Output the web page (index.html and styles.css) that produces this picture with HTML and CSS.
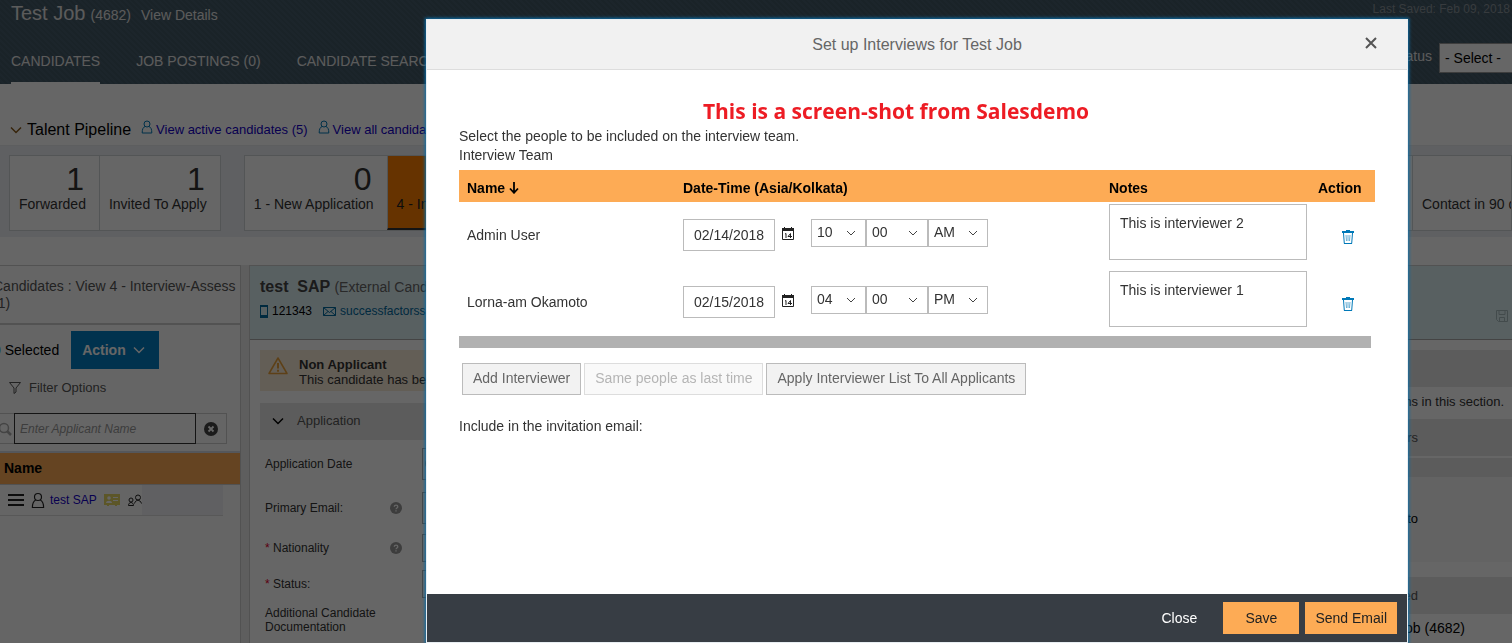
FILE: index.html
```html
<!DOCTYPE html>
<html lang="en">
<head>
    <meta charset="UTF-8">
    <meta name="viewport" content="width=device-width, initial-scale=1.0">
    <title>Set up Interviews for Test Job</title>
    <link rel="stylesheet" href="styles.css">
</head>
<body>
    <!-- Shared icons -->
    <svg class="sprite" aria-hidden="true">
        <symbol id="icon-person" viewBox="0 0 12 14">
            <circle cx="6" cy="4" r="3" fill="none" stroke="currentColor"/>
            <path d="M4 6.500C2 7.500 1.200 9 1.200 13h9.600c0-4-.8-5.500-2.800-6.500" fill="none" stroke="currentColor"/>
        </symbol>
        <symbol id="icon-down" viewBox="0 0 12 8">
            <path d="M1 1.500l5 5 5-5" fill="none" stroke="currentColor" stroke-width="1.500"/>
        </symbol>
        <symbol id="icon-calendar" viewBox="0 0 12 13">
            <path d="M.5 2.500h11v10H.5z" fill="none" stroke="currentColor"/>
            <path d="M0 1h12v3H0zM2 0h1v1H2zM9 0h1v1H9z" fill="currentColor"/>
            <path d="M3 7l1-.5V11M8.500 11V6.500L6 9.500h4" fill="none" stroke="currentColor"/>
        </symbol>
        <symbol id="icon-trash" viewBox="0 0 14 16">
            <path d="M1 2h4V1h4v1h4v2H1z" fill="currentColor"/>
            <path d="M2.500 4l.8 10.500h7.400L11.500 4" fill="none" stroke="currentColor"/>
            <path d="M3 14h8v1H3z" fill="currentColor"/>
            <path d="M5 6l.5 6M7 6v6M9 6l-.5 6" fill="none" stroke="currentColor" opacity="0.6"/>
        </symbol>
        <symbol id="icon-help" viewBox="0 0 12 12">
            <circle cx="6" cy="6" r="6" fill="#999"/>
            <path d="M4.300 4.700c0-2.200 3.500-2.200 3.500 0C7.800 6 6 5.900 6 7.300M6 8.200v1.400" fill="none" stroke="#fff" stroke-width="1.300"/>
        </symbol>
    </svg>

    <div class="page">
        <!-- Job Header -->
        <header class="job-header">
            <div class="job-main">
                <div class="job-title">
                    <h1>Test Job</h1>
                    <span>(4682)</span>
                    <a href="#">View Details</a>
                </div>
                <nav class="tabs">
                    <a href="#" class="active">CANDIDATES</a>
                    <a href="#">JOB POSTINGS (0)</a>
                    <a href="#">CANDIDATE SEARCH</a>
                </nav>
            </div>
            <div class="job-side">
                <p class="saved">Last Saved: Feb 09, 2018</p>
                <div class="job-status">
                    <label for="jobStatus">Job Status</label>
                    <select id="jobStatus"><option>- Select -</option></select>
                </div>
            </div>
        </header>

        <!-- Talent Pipeline -->
        <section class="pipeline-head">
            <svg class="pipeline-arrow"><use href="#icon-down"/></svg>
            <h2>Talent Pipeline</h2>
            <a href="#"><svg><use href="#icon-person"/></svg>View active candidates (5)</a>
            <a href="#"><svg><use href="#icon-person"/></svg>View all candidates (5)</a>
        </section>
        <section class="pipeline">
            <div class="tiles">
                <div class="tile"><strong>1</strong><span>Forwarded</span></div>
                <div class="tile"><strong>1</strong><span>Invited To Apply</span></div>
            </div>
            <div class="tiles tiles-wide">
                <div class="tile"><strong>0</strong><span>1 - New Application</span></div>
                <div class="tile selected"><strong>1</strong><span>4 - Interview-Assess</span></div>
                <div class="tile filler"></div>
                <div class="tile last"><strong></strong><span>Contact in 90 days</span></div>
            </div>
        </section>

        <main class="workspace">
            <!-- Candidate List -->
            <aside class="list">
                <h3>Candidates : View 4 - Interview-Assess (1)</h3>
                <div class="list-actions">
                    <span><a href="#">0</a> Selected</span>
                    <button class="action">Action <svg><use href="#icon-down"/></svg></button>
                </div>
                <a href="#" class="filter">
                    <svg viewBox="0 0 12 12"><path d="M.5.500h11L7 6v4l-2 1.500V6z" fill="none" stroke="currentColor"/></svg>
                    Filter Options
                </a>
                <div class="search">
                    <svg class="search-icon" viewBox="0 0 14 14"><circle cx="6" cy="6" r="4.500" fill="none" stroke="#aaa" stroke-width="1.500"/><path d="M9 9l4 4" stroke="#aaa" stroke-width="2.500"/></svg>
                    <input type="text" placeholder="Enter Applicant Name" aria-label="Applicant name">
                    <button aria-label="Clear search">
                        <svg viewBox="0 0 14 14"><circle cx="7" cy="7" r="7" fill="#444"/><path d="M4.500 4.500l5 5M9.500 4.500l-5 5" stroke="#fff" stroke-width="1.800"/></svg>
                    </button>
                </div>
                <div class="list-head">Name</div>
                <div class="list-row">
                    <svg class="menu-icon" viewBox="0 0 16 14"><path d="M0 2h16M0 7h16M0 12h16" stroke="#222" stroke-width="2"/></svg>
                    <svg class="person-icon"><use href="#icon-person"/></svg>
                    <a href="#">test SAP</a>
                    <svg class="card-icon" viewBox="0 0 16 12"><path d="M0 0h16v11h-3v1h-2v-1H5v1H3v-1H0z" fill="#e6d765"/><circle cx="5" cy="4" r="1.800" fill="#fff"/><path d="M2 9c0-3 6-3 6 0zM9 3h5v1H9zM9 6h5v1H9z" fill="#fff"/></svg>
                    <svg class="people-icon" viewBox="0 0 14 12"><g fill="none" stroke="#222"><circle cx="3" cy="6" r="2"/><path d="M.5 11.500c0-4 5-4 5 0z"/><circle cx="10" cy="3.500" r="2.500"/><path d="M6.500 9.500C7.500 5.500 12 5 13.500 9.500"/></g></svg>
                    <span class="row-rest"></span>
                </div>
            </aside>

            <!-- Candidate Details -->
            <section class="details">
                <div class="candidate">
                    <h3>test&nbsp; SAP <span>(External Candidate)</span></h3>
                    <div class="contact">
                        <svg class="phone-icon" viewBox="0 0 8 13"><path d="M0 0h8v13H0zM1 2v8h6V2z" fill="#00699e" fill-rule="evenodd"/></svg>
                        <span>121343</span>
                        <svg class="mail-icon" viewBox="0 0 13 9"><path d="M.5.500h12v8H.5zl6 5 6-5M.5 8.500L5 4.500M12.500 8.500L8 4.500" fill="none" stroke="#00699e"/></svg>
                        <a href="#">successfactorssap@gmail.com</a>
                        <svg class="save-icon" viewBox="0 0 12 12"><path d="M.5.500h11v11h-9l-2-2zM3 .500v4h6v-4M3.500 11.500v-4h5v4" fill="none" stroke="#a9bcbf"/></svg>
                    </div>
                </div>
                <div class="detail-columns">
                    <div class="application">
                        <div class="notice">
                            <svg viewBox="0 0 20 18"><path d="M10 1L19 16.500H1z" fill="none" stroke="#e9a13b" stroke-width="1.500" stroke-linejoin="round"/><path d="M10 6v5.500M10 12.800v2" stroke="#e9a13b" stroke-width="2"/></svg>
                            <p><strong>Non Applicant</strong><br>This candidate has been added</p>
                        </div>
                        <h4><svg><use href="#icon-down"/></svg>Application</h4>
                        <form class="fields">
                            <div class="field">
                                <label for="appDate">Application Date</label>
                                <input type="text" id="appDate" value="02/09/2018">
                            </div>
                            <div class="field">
                                <label for="email">Primary Email:</label>
                                <svg><use href="#icon-help"/></svg>
                                <input type="text" id="email">
                            </div>
                            <div class="field short">
                                <label for="nationality"><b>*</b> Nationality</label>
                                <svg><use href="#icon-help"/></svg>
                                <input type="text" id="nationality">
                            </div>
                            <div class="field short">
                                <label for="status"><b>*</b> Status:</label>
                                <input type="text" id="status">
                            </div>
                            <div class="field short">
                                <span class="field-name">Additional Candidate Documentation</span>
                            </div>
                        </form>
                    </div>
                    <div class="side">
                        <div class="side-bar"></div>
                        <p class="side-empty">There are no items in this section.</p>
                        <div class="side-bar">Interviewers</div>
                        <div class="side-box">
                            <div class="side-strip"></div>
                            <p>Lorna-am Okamoto</p>
                        </div>
                        <div class="side-bar">Jobs Applied</div>
                        <p class="side-job">Test Job (4682)</p>
                    </div>
                </div>
            </section>
        </main>
    </div>

    <!-- Interview Setup Dialog -->
    <div class="overlay">
        <div class="dialog" role="dialog" aria-labelledby="dialogTitle">
            <div class="dialog-head">
                <h2 id="dialogTitle">Set up Interviews for Test Job</h2>
                <button class="dismiss" aria-label="Close dialog">
                    <svg viewBox="0 0 12 12"><path d="M1 1l10 10M11 1L1 11" stroke="#555" stroke-width="2"/></svg>
                </button>
            </div>
            <div class="dialog-body">
                <p class="banner">This is a screen-shot from Salesdemo</p>
                <p>Select the people to be included on the interview team.</p>
                <p>Interview Team</p>
                <table>
                    <thead>
                        <tr>
                            <th class="col-name">Name <svg viewBox="0 0 10 12"><path d="M5 0v11M1 6.500l4 4.300 4-4.300" fill="none" stroke="#000" stroke-width="1.800"/></svg></th>
                            <th>Date-Time (Asia/Kolkata)</th>
                            <th class="col-notes">Notes</th>
                            <th class="col-action">Action</th>
                        </tr>
                    </thead>
                    <tbody>
                        <tr>
                            <td>Admin User</td>
                            <td>
                                <div class="datetime">
                                    <input type="text" value="02/14/2018" aria-label="Date">
                                    <button class="icon-button" aria-label="Pick date"><svg><use href="#icon-calendar"/></svg></button>
                                    <div class="time">
                                        <select class="hour" aria-label="Hour"><option>10</option></select>
                                        <select class="minute" aria-label="Minute"><option>00</option></select>
                                        <select class="period" aria-label="AM or PM"><option>AM</option></select>
                                    </div>
                                </div>
                            </td>
                            <td><textarea aria-label="Notes">This is interviewer 2</textarea></td>
                            <td class="row-action"><button class="icon-button trash" aria-label="Delete"><svg><use href="#icon-trash"/></svg></button></td>
                        </tr>
                        <tr>
                            <td>Lorna-am Okamoto</td>
                            <td>
                                <div class="datetime">
                                    <input type="text" value="02/15/2018" aria-label="Date">
                                    <button class="icon-button" aria-label="Pick date"><svg><use href="#icon-calendar"/></svg></button>
                                    <div class="time">
                                        <select class="hour" aria-label="Hour"><option>04</option></select>
                                        <select class="minute" aria-label="Minute"><option>00</option></select>
                                        <select class="period" aria-label="AM or PM"><option>PM</option></select>
                                    </div>
                                </div>
                            </td>
                            <td><textarea aria-label="Notes">This is interviewer 1</textarea></td>
                            <td class="row-action"><button class="icon-button trash" aria-label="Delete"><svg><use href="#icon-trash"/></svg></button></td>
                        </tr>
                    </tbody>
                </table>
                <div class="table-end"></div>
                <div class="team-buttons">
                    <button>Add Interviewer</button>
                    <button disabled>Same people as last time</button>
                    <button>Apply Interviewer List To All Applicants</button>
                </div>
                <p>Include in the invitation email:</p>
            </div>
            <div class="dialog-foot">
                <button class="plain">Close</button>
                <button>Save</button>
                <button>Send Email</button>
            </div>
        </div>
    </div>
</body>
</html>
```
FILE: styles.css
```css
/* General Styles */
* {
    box-sizing: border-box;
}

body {
    font-family: "Liberation Sans", Arial, sans-serif;
    font-size: 14px;
    line-height: 19px;
    margin: 0;
    color: #333;
    overflow: hidden;
}

h1, h2, h3, h4, p {
    margin: 0;
    font-weight: normal;
}

a {
    color: #1400c8;
    text-decoration: none;
}

button, input, select, textarea {
    font: inherit;
    color: inherit;
    margin: 0;
    border-radius: 0;
}

button {
    cursor: pointer;
}

svg {
    display: block;
    flex: none;
}

.sprite {
    display: none;
}

.page {
    height: 100vh;
    overflow: hidden;
    background: #fff;
}

/* Job Header */
.job-header {
    display: flex;
    justify-content: space-between;
    height: 84px;
    padding-left: 11px;
    background: repeating-linear-gradient(45deg, #435764 0 2px, #485e6c 2px 4px);
    color: #e4e4e4;
}

.job-header a {
    color: #e4e4e4;
}

.job-main {
    display: flex;
    flex-direction: column;
    justify-content: space-between;
}

.job-title {
    display: flex;
    align-items: baseline;
    gap: 5px;
    padding-top: 4px;
}

.job-title h1 {
    font-size: 20px;
}

.job-title a {
    margin-left: 5px;
}

.tabs {
    display: flex;
    gap: 36px;
}

.tabs a {
    padding-bottom: 11px;
    border-bottom: 2px solid transparent;
}

.tabs .active {
    border-color: #fff;
}

.job-side {
    display: flex;
    flex-direction: column;
    align-items: flex-end;
    gap: 24px;
}

.saved {
    padding-right: 2px;
    font-size: 12px;
    color: #8a949b;
}

.job-status {
    display: flex;
    gap: 7px;
    align-items: center;
    margin-right: -8px;
    line-height: 26px;
}

.job-status label {
    align-self: flex-start;
}

.job-status select {
    appearance: none;
    width: 81px;
    height: 30px;
    padding: 0 5px;
    border: 1px solid #999;
    background: #fff;
    color: #000;
}

/* Talent Pipeline */
.pipeline-head {
    display: flex;
    align-items: center;
    gap: 10px;
    height: 61px;
    padding: 30px 10px 0;
}

.pipeline-head h2 {
    margin-left: -5px;
    font-size: 16px;
    color: #000;
}

.pipeline-head a {
    display: flex;
    gap: 3px;
    font-size: 13px;
    white-space: nowrap;
}

.pipeline-head a svg {
    width: 12px;
    height: 14px;
    color: #0079b8;
}

.pipeline-arrow {
    width: 12px;
    height: 8px;
    color: #8a5a1c;
}

.pipeline {
    display: flex;
    gap: 23px;
    padding: 9px 0 6px 9px;
    background: #edf1f5;
    border-top: 1px solid #e8ebee;
}

.tiles {
    display: flex;
    border: 1px solid #cfd4d8;
    background: #fff;
}

.tiles-wide {
    flex: 1;
    overflow: hidden;
}

.tile {
    display: flex;
    flex: none;
    flex-direction: column;
    height: 74px;
    padding: 5px 13px 0 9px;
    white-space: nowrap;
}

.tile + .tile {
    border-left: 1px solid #cfd4d8;
}

.tile strong {
    height: 34px;
    padding-right: 2px;
    font-size: 32px;
    line-height: 36px;
    font-weight: normal;
    text-align: right;
}

.tile.selected {
    background: #ff8000;
    border-bottom: 2px solid #333;
    color: #222;
}

.tile.filler {
    flex: 1;
}

.tile.last {
    width: 99px;
}

/* Workspace */
.workspace {
    display: flex;
    gap: 8px;
    margin: 28px 0 0 -8px;
    background: #ececec;
}

/* Candidate List */
.list {
    display: flex;
    flex: none;
    flex-direction: column;
    width: 249px;
    height: 400px;
    border-top: 1px solid #ccc;
    border-right: 1px solid #ccc;
    background: #fdfdfd;
}

.list h3 {
    height: 59px;
    padding: 12px 0 0 1px;
    font-size: 14px;
    line-height: 17px;
    color: #555;
    border-bottom: 2px solid #ccc;
}

.list-actions {
    display: flex;
    align-items: center;
    gap: 12px;
    padding: 6px 0 0 1px;
    color: #000;
}

.list-actions a {
    color: #0079b8;
}

.action {
    display: flex;
    align-items: center;
    gap: 7px;
    height: 38px;
    padding: 0 14px 0 11px;
    border: 0;
    background: #007dc3;
    color: #fff;
    font-weight: bold;
}

.action svg {
    width: 12px;
    height: 8px;
}

.filter {
    display: flex;
    align-items: center;
    gap: 8px;
    padding: 9px 0 0 17px;
    font-size: 13px;
    color: #555;
}

.filter svg {
    width: 12px;
    height: 12px;
}

.search {
    display: flex;
    align-items: center;
    width: 235px;
    height: 31px;
    margin: 16px 0 7px;
    border: 1px solid #ccc;
}

.search-icon {
    width: 14px;
    height: 14px;
    margin-left: 5px;
    margin-right: 2px;
}

.search input {
    width: 182px;
    height: 31px;
    padding: 0 5px;
    border: 1px solid #333;
    background: #fff;
    font-size: 12px;
}

.search input::placeholder {
    color: #999;
    font-style: italic;
}

.search button {
    width: 30px;
    padding: 0;
    border: 0;
    background: none;
}

.search button svg {
    width: 14px;
    height: 14px;
    margin: auto;
}

.list-head {
    height: 34px;
    padding: 6px 12px;
    border-top: 2px solid #d5dae4;
    border-bottom: 1px solid #ccc;
    background: #fdab55;
    color: #000;
    font-weight: bold;
}

.list-row {
    display: flex;
    align-items: center;
    height: 31px;
    width: 231px;
    padding-left: 16px;
    border-bottom: 1px solid #ddd;
    font-size: 12px;
}

.menu-icon {
    width: 16px;
    height: 14px;
}

.person-icon {
    width: 14px;
    height: 17px;
    margin: 0 5px 0 7px;
    color: #222;
}

.card-icon {
    width: 16px;
    height: 12px;
    margin: 0 8px 0 7px;
}

.people-icon {
    width: 14px;
    height: 12px;
}

.row-rest {
    flex: 1;
    align-self: stretch;
    background: #eff1f5;
}

/* Candidate Details */
.details {
    flex: 1;
    min-width: 0;
    border-left: 1px solid #ccc;
    border-top: 1px solid #ccc;
    background: #fff;
}

.candidate {
    height: 74px;
    padding: 10px 0 0 10px;
    border-bottom: 1px solid #aaa;
    background: #dceff3;
}

.candidate h3 {
    font-size: 16px;
    line-height: 22px;
    font-weight: bold;
    color: #444;
}

.candidate h3 span {
    font-size: 14px;
    font-weight: normal;
    color: #666;
}

.contact {
    display: flex;
    align-items: center;
    gap: 4px;
    padding-top: 2px;
    font-size: 12px;
    color: #000;
}

.contact a {
    color: #00699e;
}

.phone-icon {
    width: 8px;
    height: 13px;
}

.mail-icon {
    width: 13px;
    height: 9px;
    margin-left: 7px;
}

.save-icon {
    width: 12px;
    height: 12px;
    margin: 10px 4px 0 auto;
}

.detail-columns {
    display: flex;
    gap: 20px;
    padding: 10px 0 0 10px;
}

.application {
    flex: 2;
}

.notice {
    display: flex;
    gap: 11px;
    height: 41px;
    padding: 7px 8px;
    background: #f8ead6;
    font-size: 13px;
    line-height: 15px;
}

.notice svg {
    width: 20px;
    height: 18px;
}

.application h4 {
    display: flex;
    align-items: center;
    gap: 13px;
    height: 37px;
    margin-top: 12px;
    padding: 0 12px 2px;
    background: #e6e6e6;
    font-size: 13px;
    color: #555;
}

.application h4 svg {
    width: 12px;
    height: 8px;
    color: #000;
}

.fields {
    display: flex;
    flex-direction: column;
    gap: 8px;
    padding: 6px 0 0 5px;
    font-size: 12px;
    line-height: 14px;
}

.field {
    display: flex;
    align-items: center;
    min-height: 36px;
}

.field label, .field-name {
    width: 125px;
}

.field svg {
    width: 12px;
    height: 12px;
}

.field label b {
    color: #e3002b;
    font-weight: normal;
}

.field input {
    flex: none;
    width: 300px;
    height: 32px;
    margin-left: auto;
    padding: 0 2px;
    border: 1px solid #aaa;
}

.field.short {
    min-height: 28px;
}

.field.short input {
    height: 28px;
}

.field label + input {
    margin-left: 32px;
}

.field svg + input {
    margin-left: 20px;
}

.side {
    flex: 1;
    font-size: 13px;
    text-align: right;
}

.side-bar {
    height: 37px;
    padding: 9px 94px 0 0;
    background: #e6e6e6;
    color: #555;
}

.side-empty {
    padding: 5px 8px 8px 0;
}

.side-box {
    height: 104px;
    margin: 2px 0 15px;
    background: #f8f8f8;
    color: #000;
}

.side-strip {
    height: 19px;
    background: #e6e6e6;
}

.side-box p {
    padding: 32px 94px 0 0;
}

.side-job {
    padding: 5px 47px 0 0;
    font-size: 14px;
    color: #000;
}

/* Dialog */
.overlay {
    position: fixed;
    inset: 0;
    display: flex;
    padding: 19px 104px 0 426px;
    background: rgba(0, 0, 0, 0.6);
}

.dialog {
    display: flex;
    flex: 1;
    flex-direction: column;
    min-width: 0;
    border: 1px solid #e8eef2;
    background: #fff;
    box-shadow: 0 0 3px 1px #0a6ea8;
}

.dialog-head {
    display: flex;
    align-items: center;
    height: 50px;
    padding: 0 30px;
    background: #f1f1f1;
    border-bottom: 1px solid #ddd;
}

.dialog-head h2 {
    flex: 1;
    padding-left: 12px;
    font-size: 16px;
    color: #666;
    text-align: center;
}

.dismiss {
    padding: 0 0 3px;
    border: 0;
    background: none;
}

.dismiss svg {
    width: 12px;
    height: 12px;
}

.dialog-body {
    flex: 1;
    padding: 25px 32px 0;
}

.banner {
    font-family: "Open Sans", "Noto Sans", sans-serif;
    font-size: 21px;
    line-height: 32px;
    font-weight: bold;
    color: #ed1c24;
    text-align: center;
    padding-right: 42px;
}

.dialog table {
    width: 100%;
    margin-top: 5px;
    border-collapse: collapse;
    table-layout: fixed;
}

.dialog th {
    height: 32px;
    padding: 5px 8px 0;
    background: #fdab55;
    color: #000;
    text-align: left;
}

.dialog th svg {
    display: inline-block;
    width: 10px;
    height: 12px;
    vertical-align: -1px;
}

.dialog td {
    height: 67px;
    padding: 0 8px;
}

.col-name {
    width: 216px;
}

.col-notes {
    width: 209px;
}

.col-action {
    width: 65px;
}

.dialog td.row-action {
    padding-top: 2px;
}

.datetime {
    display: flex;
    align-items: center;
    gap: 7px;
    margin-bottom: 2px;
}

.datetime input {
    width: 92px;
    height: 32px;
    padding: 0 10px;
    border: 1px solid #bbb;
}

.time {
    display: flex;
    height: 32px;
    margin-left: 10px;
}

.time select {
    appearance: none;
    height: 28px;
    padding: 0 5px;
    border: 1px solid #bbb;
    background: #fff url("data:image/svg+xml,%3Csvg xmlns='http://www.w3.org/2000/svg' width='10' height='6'%3E%3Cpath d='M1 1l4 4 4-4' fill='none' stroke='%23444'/%3E%3C/svg%3E") no-repeat right 9px center;
}

.time .hour {
    width: 55px;
}

.time .minute {
    width: 62px;
}

.time .period {
    width: 60px;
}

.icon-button {
    padding: 0 0 3px;
    border: 0;
    background: none;
    color: #222;
}

.icon-button svg {
    width: 12px;
    height: 13px;
}

.trash {
    display: block;
    margin: 0 12px 0 auto;
    padding: 0;
    color: #0079b8;
}

.trash svg {
    width: 14px;
    height: 16px;
}

.dialog textarea {
    display: block;
    width: 198px;
    height: 56px;
    margin-bottom: 7px;
    padding: 9px 10px;
    border: 1px solid #bbb;
    resize: none;
}

.table-end {
    height: 12px;
    margin-right: 4px;
    background: #b1b1b1;
}

.team-buttons {
    display: flex;
    gap: 3px;
    padding: 15px 3px 22px;
}

.team-buttons button {
    height: 32px;
    padding: 0 10px 2px;
    border: 1px solid #bbb;
    background: #f2f2f2;
    color: #666;
}

.team-buttons button:disabled {
    border-color: #ddd;
    background: #f9f9f9;
    color: #b5b5b5;
}

.dialog-foot {
    display: flex;
    justify-content: flex-end;
    gap: 6px;
    padding: 8px 10px;
    height: 48px;
    background: #373d44;
}

.dialog-foot button {
    height: 32px;
    min-width: 76px;
    padding: 0 10px;
    border: 0;
    background: #fdab55;
    color: #222;
}

.dialog-foot .plain {
    background: none;
    color: #fff;
}
```
